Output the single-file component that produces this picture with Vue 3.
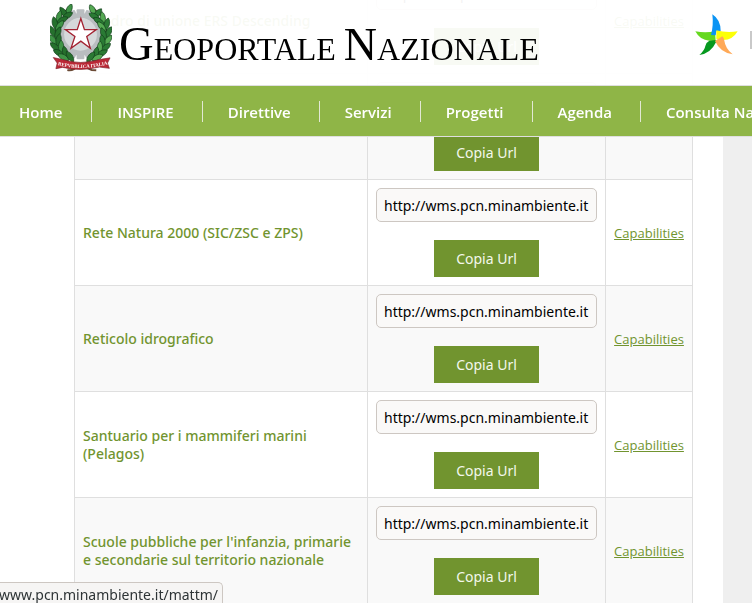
<script setup>
const menu = ['Home', 'INSPIRE', 'Direttive', 'Servizi', 'Progetti', 'Agenda', 'Consulta Nazionale']

const services = [
  'Quadro di unione ERS Descending',
  'Rete GPS',
  'Rete Natura 2000 (SIC/ZSC e ZPS)',
  'Reticolo idrografico',
  'Santuario per i mammiferi marini (Pelagos)',
  "Scuole pubbliche per l'infanzia, primarie e secondarie sul territorio nazionale"
]
const url = 'http://wms.pcn.minambiente.it'

// Leaves of the wreath: x, y, rotation, length
const leftLeaves = [
  [85, 27, 25, 19], [69, 36, -35, 20], [80, 45, 60, 18], [54, 50, 15, 21], [65, 58, 65, 18],
  [42, 69, -12, 21], [56, 76, 38, 20], [35, 94, -30, 21], [51, 98, 22, 20], [36, 119, -38, 20],
  [53, 120, 10, 20], [43, 141, -50, 20], [61, 140, 0, 20], [54, 159, -60, 19], [73, 157, -12, 19],
  [68, 172, -62, 19], [88, 170, -35, 19]
]
const rightLeaves = [
  [157, 28, -28, 18], [172, 39, 40, 19], [162, 47, -62, 18], [188, 53, -8, 20], [176, 62, -58, 19],
  [200, 72, 14, 20], [185, 79, -40, 20], [205, 97, 28, 20], [190, 101, -18, 20], [203, 121, 38, 20],
  [187, 123, -8, 20], [196, 143, 50, 20], [179, 143, 4, 20], [185, 160, 62, 19], [167, 159, 14, 19],
  [171, 173, 64, 19], [151, 171, 38, 19]
]
const teeth = Array.from({ length: 16 }, (_, i) => i * 22.5)
const leaf = (n) => `M0 ${-n} C11 ${-n / 2} 10 ${n / 2} 0 ${n} C-10 ${n / 2} -11 ${-n / 2} 0 ${-n}Z`
</script>

<template>
  <div class="page">
    <header class="site-header">
      <div class="brand">
        <svg class="emblem" viewBox="27 10 189 213" role="img" aria-label="Repubblica Italiana">
          <g fill="#b9bdc0">
            <rect v-for="a in teeth" :key="a" x="108" y="26" width="24" height="20" rx="3" :transform="`rotate(${a} 120 102)`" />
            <circle cx="120" cy="102" r="65" />
          </g>
          <circle cx="120" cy="102" r="50" fill="#d6d9db" />
          <path d="M82 182 Q50 160 43 108 T88 20" fill="none" stroke="#57422c" stroke-width="4" />
          <path d="M158 182 Q190 160 198 108 T155 20" fill="none" stroke="#57422c" stroke-width="4" />
          <g stroke="#12401b" stroke-width="2">
            <path v-for="(l, i) in leftLeaves" :key="'l' + i" :d="leaf(l[3])" :fill="i % 3 ? '#25702d' : '#3f9446'" :transform="`translate(${l[0]} ${l[1]}) rotate(${l[2]})`" />
            <path v-for="(l, i) in rightLeaves" :key="'r' + i" :d="leaf(l[3])" :fill="i % 3 ? '#2a7a34' : '#55a953'" :transform="`translate(${l[0]} ${l[1]}) rotate(${l[2]})`" />
          </g>
          <path d="M121 54 L132 88 L168 88 L139 109 L150 145 L121 123 L91 145 L103 109 L74 88 L110 88Z" fill="#fff" stroke="#a32332" stroke-width="4" />
          <path d="M80 211 Q98 216 116 193 L154 211 L168 212 M92 184 L116 202 L150 184" fill="none" stroke="#6b4a35" stroke-width="6" />
          <path d="M37 173 L65 179 Q120 197 178 179 L210 174 L202 190 L208 206 L178 202 Q120 216 65 203 L45 207 L49 190Z" fill="#bb2836" stroke="#78202a" stroke-width="2" />
          <path id="motto" d="M51 196 Q120 214 199 195" fill="none" />
          <text class="motto"><textPath href="#motto">REPVBBLICA ITALIANA</textPath></text>
        </svg>
        <h1 class="title"><span class="initial-g">G</span>EOPORTALE <span class="initial-n">N</span>AZIONALE</h1>
        <svg class="star" viewBox="74 41 129 126" role="img" aria-label="Ministero dell'Ambiente">
          <path d="M75 93 Q105 99 134 93 L136 122 L117 121 Q89 120 75 93Z" fill="#65d81f" />
          <path d="M117 121 L136 119 L137 126 Q121 160 87 164 Q103 150 105 137 Q107 126 117 121Z" fill="#06991f" />
          <path d="M126 42 Q151 58 151 92 L138 93 L136 105 L122 104 Q130 75 126 42Z" fill="#0b94f4" />
          <path d="M138 90 Q168 98 202 93 Q186 121 155 119 L138 117Z" fill="#fcff08" />
          <path d="M134 122 L156 108 Q161 112 162 121 Q165 144 187 162 Q150 157 134 122Z" fill="#ffa957" />
        </svg>
        <span class="divider"></span>
      </div>
      <nav class="menu">
        <a v-for="item in menu" :key="item" href="#">{{ item }}</a>
      </nav>
    </header>

    <main class="content">
      <table class="services">
        <colgroup><col class="col-name"><col class="col-url"><col class="col-link"></colgroup>
        <tbody>
          <tr v-for="(name, i) in services" :key="name">
            <td class="name"><label :for="`url-${i}`">{{ name }}</label></td>
            <td>
              <div class="copy">
                <input :id="`url-${i}`" type="text" readonly :value="url">
                <button type="button">Copia Url</button>
              </div>
            </td>
            <td class="caps"><a href="#">Capabilities</a></td>
          </tr>
        </tbody>
      </table>
    </main>

    <div class="status"><span>www.pcn.minambiente.it/mattm/</span></div>
  </div>
</template>

<style>
body {
  background: #efefef;
}
</style>

<style scoped>
.page {
  height: 100vh;
  overflow: hidden;
  font-family: "Open Sans", sans-serif;
}
.site-header {
  position: fixed;
  top: 0;
  left: 0;
  right: 0;
  z-index: 2;
  background: rgba(255, 255, 255, 0.95);
}
.brand {
  display: flex;
  height: 85px;
  box-sizing: border-box;
  padding: 4px 0 0 50px;
  align-items: flex-start;
}
.emblem {
  flex: none;
  width: 62px;
  height: 70px;
}
.motto {
  font: bold 15px "Liberation Serif", serif;
  fill: #fff;
}
.title {
  margin: 15px 0 0 7px;
  font: 32px/50px "Liberation Serif", serif;
  color: #000;
  white-space: nowrap;
}
.initial-g {
  font-size: 48px;
}
.initial-n {
  font-size: 46px;
}
.star {
  flex: none;
  width: 43px;
  height: 42px;
  margin: 10px 12px 0 auto;
}
.divider {
  flex: none;
  width: 2px;
  height: 18px;
  margin-top: 27px;
  background: #c9c9c9;
}
.menu {
  display: flex;
  align-items: center;
  height: 50px;
  overflow: hidden;
  border-top: 1px solid #dfdfdf;
  border-bottom: 1px solid #dfdfdf;
  background: #8fb547;
}
.menu a {
  flex: none;
  padding: 1px 28px 0 25px;
  border-right: 1px solid #e2e8d4;
  color: #fff;
  font-size: 15px;
  font-weight: 600;
  line-height: 20px;
  text-decoration: none;
}
.menu a:first-child {
  padding-left: 19px;
  padding-right: 29px;
}
.content {
  margin-right: 29px;
  padding: 0 30px 0 74px;
  background: #fff;
}
.services {
  width: 100%;
  margin-top: -33px;
  border-collapse: collapse;
  table-layout: fixed;
}
.col-url {
  width: 238px;
}
.col-link {
  width: 87px;
}
.services td {
  height: 89px;
  padding: 8px;
  border: 1px solid #dfdfdf;
  vertical-align: middle;
}
.services tr:nth-child(even) {
  background: #f9f9f9;
}
.services .name {
  color: #71942f;
  font: 500 14px/18px "Noto Sans", sans-serif;
}
.copy {
  display: flex;
  flex-direction: column;
  align-items: center;
  gap: 18px;
}
.copy input {
  width: 100%;
  height: 34px;
  box-sizing: border-box;
  padding: 0 7px;
  border: 1px solid #cdc7c2;
  border-radius: 5px;
  background: #faf9f8;
  color: #000;
  font: 14px "Noto Sans", sans-serif;
}
.copy button {
  width: 105px;
  height: 37px;
  padding: 0;
  border: 0;
  background: #71942f;
  color: #f4f8ec;
  font: 14px "Noto Sans", sans-serif;
}
.services .caps {
  text-align: center;
  font-size: 13px;
  line-height: 18px;
}
.caps a {
  color: #71942f;
}
.status {
  position: fixed;
  left: 0;
  bottom: 0;
  z-index: 3;
  display: flex;
  justify-content: flex-end;
  width: 218px;
  height: 20px;
  padding-right: 4px;
  overflow: hidden;
  border: solid #cdc7c2;
  border-width: 1px 1px 0 0;
  border-radius: 0 5px 0 0;
  background: #f6f5f4;
  color: #2e3436;
  font: 14px/24px "Noto Sans", sans-serif;
  white-space: nowrap;
}
</style>
